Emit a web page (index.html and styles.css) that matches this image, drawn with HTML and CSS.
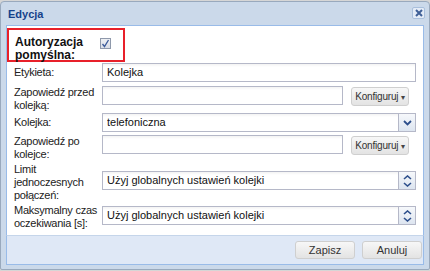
FILE: index.html
```html
<!DOCTYPE html>
<html lang="pl">
<head>
    <meta charset="UTF-8">
    <title>Edycja</title>
    <link rel="stylesheet" href="styles.css">
</head>
<body>
    <div class="window">
        <div class="win-header">
            <span class="win-title">Edycja</span>
            <span class="win-close">
                <svg width="10" height="10" viewBox="0 0 10 10"><path d="M2 2 L8 8 M8 2 L2 8" stroke="#3f5f97" stroke-width="2"/></svg>
            </span>
        </div>
        <div class="win-body">
            <div class="auth-box">
                <label class="lbl lbl-bold">Autoryzacja<br>pomyślna:</label>
                <span class="checkbox">
                    <svg width="9" height="9" viewBox="0 0 9 9"><path d="M1.5 5 L3.5 7.5 L7.5 1" stroke="#3b5a9a" stroke-width="1.3" fill="none"/></svg>
                </span>
            </div>

            <div class="row row-label">
                <label class="lbl">Etykieta:</label>
                <div class="field text">Kolejka</div>
            </div>

            <div class="row row-before">
                <label class="lbl lbl-multi">Zapowiedź przed<br>kolejką:</label>
                <div class="field text short"></div>
                <button class="btn cfg">Konfiguruj <span class="caret">▾</span></button>
            </div>

            <div class="row row-queue">
                <label class="lbl">Kolejka:</label>
                <div class="field combo">
                    <span class="value">telefoniczna</span>
                    <span class="trigger">
                        <svg width="9" height="6" viewBox="0 0 9 6"><path d="M1 1 L4.5 4.5 L8 1" stroke="#2d4f8c" stroke-width="1.8" fill="none"/></svg>
                    </span>
                </div>
            </div>

            <div class="row row-after">
                <label class="lbl lbl-multi">Zapowiedź po<br>kolejce:</label>
                <div class="field text short"></div>
                <button class="btn cfg">Konfiguruj <span class="caret">▾</span></button>
            </div>

            <div class="row row-limit">
                <label class="lbl lbl-multi">Limit<br>jednoczesnych<br>połączeń:</label>
                <div class="field combo spin">
                    <span class="value">Użyj globalnych ustawień kolejki</span>
                    <span class="trigger trigger-spin">
                        <svg width="9" height="5" viewBox="0 0 9 5"><path d="M1 4 L4.5 1 L8 4" stroke="#2d4f8c" stroke-width="1.6" fill="none"/></svg>
                        <svg width="9" height="5" viewBox="0 0 9 5"><path d="M1 1 L4.5 4 L8 1" stroke="#2d4f8c" stroke-width="1.6" fill="none"/></svg>
                    </span>
                </div>
            </div>

            <div class="row row-max">
                <label class="lbl lbl-multi">Maksymalny czas<br>oczekiwania [s]:</label>
                <div class="field combo spin">
                    <span class="value">Użyj globalnych ustawień kolejki</span>
                    <span class="trigger trigger-spin">
                        <svg width="9" height="5" viewBox="0 0 9 5"><path d="M1 4 L4.5 1 L8 4" stroke="#2d4f8c" stroke-width="1.6" fill="none"/></svg>
                        <svg width="9" height="5" viewBox="0 0 9 5"><path d="M1 1 L4.5 4 L8 1" stroke="#2d4f8c" stroke-width="1.6" fill="none"/></svg>
                    </span>
                </div>
            </div>
        </div>
        <div class="win-footer">
            <button class="btn foot">Zapisz</button>
            <button class="btn foot">Anuluj</button>
        </div>
    </div>
</body>
</html>
```

FILE: styles.css
```css
* {
    margin: 0;
    padding: 0;
    box-sizing: border-box;
}

body {
    font-family: "Liberation Sans", Arial, sans-serif;
    font-size: 11px;
    color: #222;
    background: #d6d6d6;
    width: 430px;
    height: 271px;
    overflow: hidden;
}

/* Window frame */
.window {
    width: 430px;
    height: 269px;
    margin-top: 1px;
    background: #cbd9ea;
    border: 1px solid #99a9bd;
    border-radius: 4px 4px 2px 2px;
    padding: 0 5px 4px 5px;
    display: flex;
    flex-direction: column;
}

.win-header {
    height: 23px;
    flex: none;
    display: flex;
    align-items: center;
    justify-content: space-between;
    padding-left: 2px;
}

.win-title {
    font-weight: bold;
    font-size: 11px;
    color: #15428b;
}

.win-close {
    width: 13px;
    height: 12px;
    border: 1px solid #a9bfdc;
    border-radius: 2px;
    background: #e4ecf7;
    display: flex;
    align-items: center;
    justify-content: center;
    margin-top: -2px;
    margin-right: -1px;
}

.win-body {
    height: 210px;
    flex: none;
    overflow: hidden;
    background: #fff;
    border: 1px solid #99bbe8;
    border-bottom: 0;
    padding: 2px 7px 0 0;
}

.win-footer {
    flex: 1;
    background: #dfe8f6;
    border: 1px solid #99bbe8;
    border-top: 1px solid #c5d5ea;
    display: flex;
    justify-content: flex-end;
    align-items: center;
    gap: 7px;
    padding: 0 1px 1px 0;
}

/* Form */
.lbl {
    width: 95px;
    flex: none;
    padding-left: 7px;
    padding-top: 3px;
    line-height: 13px;
    letter-spacing: -0.25px;
    white-space: nowrap;
    color: #222;
}

.lbl-multi {
    padding-top: 0;
}

.lbl-bold {
    font-weight: bold;
    font-size: 12px;
    line-height: 13px;
    letter-spacing: 0;
    color: #111;
}

.auth-box {
    width: 118px;
    height: 34px;
    border: 2px solid #e8202a;
    display: flex;
    align-items: flex-start;
    padding-top: 6px;
}

.auth-box .lbl {
    padding: 0 0 0 6px;
    width: 91px;
}

.checkbox {
    width: 11px;
    height: 11px;
    border: 1px solid #8f99ab;
    background: linear-gradient(#eef0f4, #d9dde6);
    display: flex;
    align-items: center;
    justify-content: center;
    margin-top: 2px;
}

.row {
    display: flex;
    align-items: flex-start;
}

.row-label { margin-top: 1px; }
.row-before { margin-top: 4px; }
.row-queue { margin-top: 1px; }
.row-after { margin-top: 3px; }
.row-limit { margin-top: 2px; }
.row-max { margin-top: 2px; }

.row-limit .field {
    margin-top: 8px;
}

.row-max .field {
    margin-top: 2px;
}

.field {
    height: 19px;
    border: 1px solid #b5b8c8;
    background: linear-gradient(#f3f3f3 0, #fff 3px, #fff 100%);
    padding-left: 4px;
    line-height: 17px;
    font-size: 11px;
    color: #111;
    flex: 1;
}

.field.short {
    flex: none;
    width: 241px;
}

.combo {
    display: flex;
    padding-right: 0;
}

.combo .value {
    flex: 1;
    white-space: nowrap;
    overflow: hidden;
}

.trigger {
    width: 17px;
    height: 17px;
    background: linear-gradient(#f6f8fb, #dde5f0);
    border-left: 1px solid #b5b8c8;
    display: flex;
    align-items: center;
    justify-content: center;
}

.trigger-spin {
    flex-direction: column;
    gap: 2px;
}

.btn {
    font-family: "Liberation Sans", Arial, sans-serif;
    font-size: 11px;
    color: #333;
    background: linear-gradient(#f7f7f7, #e3e3e3);
    border: 1px solid #cfcfcf;
    border-radius: 3px;
    white-space: nowrap;
}

.cfg {
    width: 58px;
    height: 19px;
    margin-left: 8px;
    margin-top: 1px;
    font-size: 10px;
    letter-spacing: -0.2px;
}

.caret {
    font-size: 8px;
    color: #444;
}

.foot {
    width: 60px;
    height: 18px;
}
```
